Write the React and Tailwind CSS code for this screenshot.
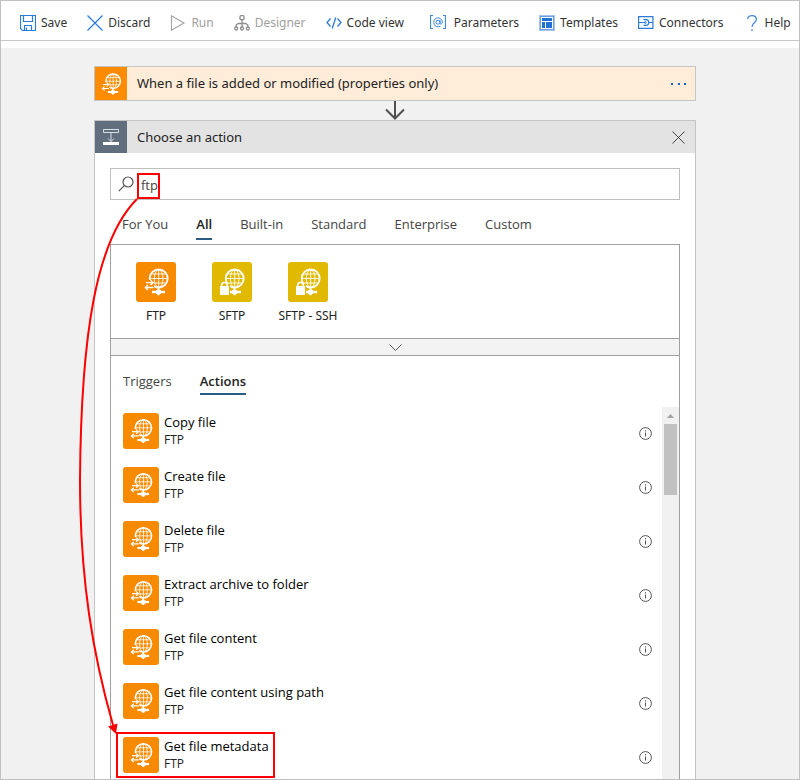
import React, { useState } from "react";

const TOOLBAR = [
  { label: "Save", icon: SaveIcon },
  { label: "Discard", icon: DiscardIcon },
  { label: "Run", icon: RunIcon, disabled: true },
  { label: "Designer", icon: DesignerIcon, disabled: true },
  { label: "Code view", icon: CodeIcon },
  { label: "Parameters", icon: ParametersIcon, wide: true },
  { label: "Templates", icon: TemplatesIcon },
  { label: "Connectors", icon: ConnectorsIcon },
  { label: "Help", icon: HelpIcon },
];

const CATEGORIES = ["For You", "All", "Built-in", "Standard", "Enterprise", "Custom"];

const CONNECTORS = [
  { name: "FTP" },
  { name: "SFTP", secure: true },
  { name: "SFTP - SSH", secure: true },
];

const ACTIONS = [
  "Copy file",
  "Create file",
  "Delete file",
  "Extract archive to folder",
  "Get file content",
  "Get file content using path",
  "Get file metadata",
];

function SaveIcon() {
  return (
    <svg width="16" height="16" viewBox="0 0 16 16" fill="none" stroke="#2b7cd9" strokeWidth="1.2">
      <path d="M.5.5h15v15h-13l-2-2z" />
      <path d="M3.500.5v6h9v-6M4.500 15.500v-5h7v5M6.500 12.500v3" />
    </svg>
  );
}

function DiscardIcon() {
  return (
    <svg width="16" height="16" viewBox="0 0 16 16" fill="none" stroke="#2b7cd9" strokeWidth="1.3">
      <path d="M.5.5l15 15M15.500.5l-15 15" />
    </svg>
  );
}

function RunIcon() {
  return (
    <svg width="16" height="16" viewBox="0 0 16 16" fill="none" stroke="#a3a3a3" strokeWidth="1.1">
      <path d="M1.500.8v14.400L14 8z" />
    </svg>
  );
}

function DesignerIcon() {
  return (
    <svg width="16" height="16" viewBox="0 0 16 16" fill="none" stroke="#8c8c8c" strokeWidth="1.3">
      <rect x="6" y=".7" width="4" height="4" rx="1" />
      <circle cx="2.200" cy="13.500" r="1.500" />
      <circle cx="8" cy="13.500" r="1.500" />
      <circle cx="13.800" cy="13.500" r="1.500" />
      <path d="M8 4.700V12M8 8.500H4.500L2.200 9.800V12M8 8.500h3.500l2.300 1.300V12" />
    </svg>
  );
}

function CodeIcon() {
  return (
    <svg width="16" height="16" viewBox="0 0 16 16" fill="none" stroke="#2b7cd9" strokeWidth="1.3">
      <path d="M4.500 3.500L1 7.500l3.500 4M11.500 3.500l3.500 4-3.500 4M9.800 2.500l-3.600 11" />
    </svg>
  );
}

function ParametersIcon() {
  return (
    <svg width="16" height="16" viewBox="0 0 16 16" fill="none" stroke="#3f88df">
      <path d="M3 .5H.5v13H3M13 .5h2.500v13H13" strokeWidth="1.200" />
      <circle cx="8" cy="7.200" r="2" />
      <path d="M10 5v3c0 1.700 2.300 1.500 2.300-1A4.300 4.500 0 1 0 10.500 11" />
    </svg>
  );
}

function TemplatesIcon() {
  return (
    <svg width="16" height="16" viewBox="0 0 16 16">
      <path d="M0 0h16v16H0z" fill="#a5c5ef" />
      <path d="M1 1h14v14H1z" fill="#6c9fe2" />
      <path d="M2 2h12v12H2z" fill="#fff" />
      <path d="M3 3h10v3H3zM3 7h3v6H3zM7 7h6v6H7z" fill="#2272d6" />
    </svg>
  );
}

function ConnectorsIcon() {
  return (
    <svg width="16" height="16" viewBox="0 0 16 16" fill="none" stroke="#2b7cd9" strokeWidth="1.2">
      <path d="M.6 1.600h14.300v11.800H.6zM.6 7.500h7M11 7.500h4" />
      <path d="M5.500 4.700H8a2.800 2.800 0 0 1 0 5.600H5.500" />
      <path d="M6.500 6.200H7a1.300 1.300 0 0 1 0 2.600h-.5" strokeWidth=".8" />
    </svg>
  );
}

function HelpIcon() {
  return (
    <svg width="16" height="16" viewBox="0 0 16 16" fill="none" stroke="#4189de" strokeWidth="1.3">
      <path d="M3.700 4C3.700 1.800 5.500.7 8 .7s4.400 1.400 4.400 3.700C12.400 7.600 8 7.500 8 12" />
      <path d="M8 14.300v1.700" />
    </svg>
  );
}

// Globe on a network stand, shared by the FTP and SFTP tiles
function ConnectorGlyph({ secure, className }) {
  return (
    <svg className={className} viewBox="0 0 40 40" fill="none" stroke="#fff">
      <circle cx="22.700" cy="16.500" r="9" strokeWidth="1.800" />
      <ellipse cx="22.700" cy="16.500" rx="4.300" ry="9" strokeWidth=".9" />
      <path d="M22.700 7.500v18M13.500 16.500h18M15 12h15M15 21h15" strokeWidth=".9" />
      <path d="M22.500 26v3" strokeWidth="2" />
      <path d="M16 30h13" strokeWidth="2.400" />
      <path d="M20 30h5" strokeWidth="4" />
      <path d="M22.500 30v3.200" strokeWidth="2.400" />
      {secure ? (
        <>
          <path d="M8 23h9v10H8z" fill="#e1b900" stroke="#e1b900" strokeWidth="2" />
          <path d="M8 24h9v9H8z" fill="#fff" stroke="none" />
          <path d="M9.700 24.500v-1.200a2.800 2.800 0 0 1 5.600 0v1.200" strokeWidth="1.600" />
        </>
      ) : (
        <>
          <path d="M9 18h7v3h2v6H9z" fill="#f88a00" stroke="none" />
          <path d="M10 20.700h7M14.500 18.200l2.700 2.500-2.700 2.400M17.500 25.500h-8M12 23.100l-2.700 2.400 2.700 2.400" strokeWidth="1.300" />
        </>
      )}
    </svg>
  );
}

function ActionGlyph() {
  return (
    <svg width="32" height="32" viewBox="0 0 32 32" fill="none" stroke="#d9dee3">
      <path d="M8.500 8.500h15v3h-15zM16 12v8.500" />
      <path d="M13 17.500l3 3 3-3" />
      <path d="M8 21h16v3H8z" fill="#fff" stroke="none" />
    </svg>
  );
}

function InfoIcon() {
  return (
    <svg width="13" height="13" viewBox="0 0 13 13" fill="none" stroke="#555">
      <circle cx="6.500" cy="6.500" r="5.900" />
      <path d="M6.500 5.500v4M6.500 3.200v1.200" />
    </svg>
  );
}

function Toolbar() {
  return (
    <header className="flex h-10 shrink-0 items-center gap-5 overflow-hidden border-b border-[#c8c8c8] bg-white pl-[19px] pt-1 font-['Noto_Sans',sans-serif]">
      {TOOLBAR.map(({ label, icon: Icon, disabled, wide }) => (
        <button
          key={label}
          disabled={disabled}
          className={`flex shrink-0 items-center text-[12px] leading-4 ${wide ? "gap-2 pl-1.5" : "gap-[5px]"} ${
            disabled ? "text-[#a0a0a0]" : "text-[#333]"
          }`}
        >
          <Icon />
          {label}
        </button>
      ))}
    </header>
  );
}

function SearchBox({ value, onChange }) {
  return (
    <label className="flex h-8 items-center border border-[#bfbfbf] bg-white pl-[7px]">
      <svg width="16" height="16" viewBox="0 0 16 16" fill="none" stroke="#555" strokeWidth="1.2">
        <circle cx="10" cy="6" r="5" />
        <path d="M6.300 9.700L.8 15.200" />
      </svg>
      <input
        type="text"
        aria-label="Search connectors and actions"
        value={value}
        onChange={(e) => onChange(e.target.value)}
        className="ml-[7px] h-full min-w-0 flex-1 bg-transparent pt-0.5 text-[13px] text-[#444] outline-none"
      />
    </label>
  );
}

export default function App() {
  const [query, setQuery] = useState("ftp");
  const [category, setCategory] = useState("All");
  const [tab, setTab] = useState("Actions");

  return (
    <div className="flex h-screen flex-col overflow-hidden border border-[#c0c0c0] bg-white font-['Open_Sans','Noto_Sans',sans-serif] text-[13px] text-[#222]">
      <Toolbar />

      <main className="mt-[7px] flex min-h-0 flex-1 flex-col bg-[#f1f1f1] pr-[10px] pt-[18px]">
        <div className="relative mx-auto flex min-h-0 w-full max-w-[602px] flex-1 flex-col">
          {/* Trigger card */}
          <section className="flex h-[35px] shrink-0 items-center border border-[#c4c4c4] bg-[#ffedda]">
            <span className="flex h-full w-8 items-center justify-center bg-[#ff8c00]">
              <ConnectorGlyph className="h-8 w-8" />
            </span>
            <h2 className="flex-1 pl-[10px] font-['Noto_Sans',sans-serif]">
              When a file is added or modified (properties only)
            </h2>
            <button aria-label="More options" className="px-2">
              <svg width="16" height="4" viewBox="0 0 16 4" fill="#1161bd">
                <path d="M0 1h2v2H0zM7 1h2v2H7zM13 1h2v2h-2z" />
              </svg>
            </button>
          </section>

          <svg className="mx-auto shrink-0" width="20" height="19" viewBox="0 0 20 19" fill="none" stroke="#505050" strokeWidth="2">
            <path d="M10 0v17M1 8.500l9 9 9-9" />
          </svg>

          {/* Action picker */}
          <section className="flex min-h-0 flex-1 flex-col border border-b-0 border-[#c4c4c4] bg-white">
            <div className="flex h-8 shrink-0 items-center bg-[#e3e3e3]">
              <span className="bg-[#616e7e]">
                <ActionGlyph />
              </span>
              <h2 className="flex-1 pl-[10px] pt-0.5 font-['Noto_Sans',sans-serif]">Choose an action</h2>
              <button aria-label="Close" className="px-[10px]">
                <svg width="13" height="13" viewBox="0 0 13 13" fill="none" stroke="#444">
                  <path d="M.5.5l12 12M12.500.5l-12 12" />
                </svg>
              </button>
            </div>

            <div className="flex min-h-0 flex-1 flex-col px-[15px] pt-[15px]">
              <SearchBox value={query} onChange={setQuery} />

              <nav className="flex h-11 shrink-0 items-end gap-7 pb-1 pl-3">
                {CATEGORIES.map((name) => (
                  <button
                    key={name}
                    onClick={() => setCategory(name)}
                    className={`h-6 border-b-2 leading-4 pb-1.5 ${
                      name === category ? "border-[#2b5c84] font-semibold" : "border-transparent text-[#444]"
                    }`}
                  >
                    {name}
                  </button>
                ))}
              </nav>

              <div className="flex min-h-0 flex-1 flex-col border border-b-0 border-[#a0a0a0]">
                <div className="flex h-[93px] shrink-0 pl-[7px] pt-[17px]">
                  {CONNECTORS.map(({ name, secure }) => (
                    <button
                      key={name}
                      className="flex w-[76px] flex-col items-center gap-1.5 font-['Noto_Sans',sans-serif] text-[12px] leading-4"
                    >
                      <span className={`rounded-[3px] ${secure ? "bg-[#e1b900]" : "bg-[#f88a00]"}`}>
                        <ConnectorGlyph secure={secure} className="h-10 w-10" />
                      </span>
                      {name}
                    </button>
                  ))}
                </div>

                <button
                  aria-label="Expand connectors"
                  className="flex h-[18px] shrink-0 items-center justify-center border-y border-[#a0a0a0] bg-[#f3f3f3]"
                >
                  <svg width="13" height="7" viewBox="0 0 13 7" fill="none" stroke="#555">
                    <path d="M.5.5l6 6 6-6" />
                  </svg>
                </button>

                <div className="flex h-[39px] shrink-0 items-end gap-7 pl-3">
                  {["Triggers", "Actions"].map((name) => (
                    <button
                      key={name}
                      onClick={() => setTab(name)}
                      className={`h-6 border-b-2 pb-0.5 leading-4 ${
                        name === tab ? "border-[#2b5c84] font-semibold" : "border-transparent text-[#444]"
                      }`}
                    >
                      {name}
                    </button>
                  ))}
                </div>

                <div className="mt-3 flex min-h-0 flex-1">
                  <ul className="min-w-0 flex-1 overflow-hidden">
                    {ACTIONS.map((name) => (
                      <li key={name} className="flex h-[54px] items-start pl-3 pr-[10px] pt-1.5">
                        <button className="flex flex-1 gap-[5px] text-left">
                          <span className="rounded-[3px] bg-[#f88a00]">
                            <ConnectorGlyph className="h-9 w-9" />
                          </span>
                          <span className="flex flex-col pt-px text-[12px] leading-[17px]">
                            <span className="text-[13px] font-medium text-black">{name}</span>
                            <span>FTP</span>
                          </span>
                        </button>
                        <button aria-label={`About ${name}`} className="mt-[14px]">
                          <InfoIcon />
                        </button>
                      </li>
                    ))}
                  </ul>
                  <div className="flex w-[17px] flex-col items-center bg-[#f1f1f1]">
                    <svg width="17" height="17" viewBox="0 0 17 17" fill="#a3a3a3">
                      <path d="M5 11h7L8.500 7z" />
                    </svg>
                    <span className="h-[71px] w-[13px] bg-[#c1c1c1]" />
                  </div>
                </div>
              </div>
            </div>
          </section>

          {/* Callouts drawn over the picker */}
          <svg
            className="pointer-events-none absolute -left-5 top-0"
            width="220"
            height="713"
            viewBox="74 66 220 713"
            fill="none"
            stroke="#f00"
            strokeWidth="2"
          >
            <rect x="138" y="174" width="21" height="24" />
            <path d="M137 199C96 240 81 335 80 480c0 100 13 175 33 245" />
            <path d="M108 726.500l9.500-3L116 734z" fill="#f00" stroke="none" />
            <rect x="117" y="733" width="157" height="44" />
          </svg>
        </div>
      </main>
    </div>
  );
}
